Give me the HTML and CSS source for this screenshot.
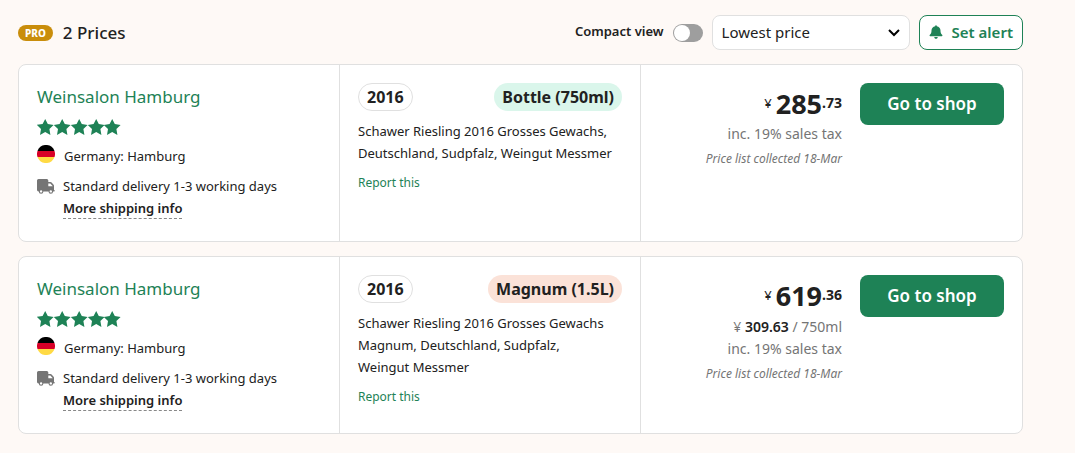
FILE: index.html
```html
<!DOCTYPE html>
<html lang="en">
<head>
<meta charset="utf-8">
<meta name="viewport" content="width=device-width, initial-scale=1">
<title>Prices</title>
<link rel="stylesheet" href="styles.css">
</head>
<body>
<svg class="sprite" aria-hidden="true">
  <symbol id="stars" viewBox="0 0 84 16">
    <path id="star" d="M8.200 0l2.600 5.100 5.800.8-4.200 4.100 1 5.900-5.200-2.800L3 15.900l1-5.900L-.2 5.900l5.800-.8z"/>
    <use href="#star" x="17"/><use href="#star" x="34"/><use href="#star" x="51"/><use href="#star" x="67"/>
  </symbol>
  <symbol id="flag" viewBox="0 0 18 18">
    <path fill="#000" d="M.5 6a9 9 0 0 1 17 0z"/>
    <path fill="#d80027" d="M.5 6h17a9 9 0 0 1 0 6H.5a9 9 0 0 1 0-6z"/>
    <path fill="#ffda44" d="M.5 12h17a9 9 0 0 1-17 0z"/>
  </symbol>
  <symbol id="truck" viewBox="0 0 18 16">
    <path fill-rule="evenodd" d="M1.500 1h8.300a1.500 1.500 0 0 1 1.500 1.500V4h2.200c.4 0 .8.200 1.100.500l2 2.200c.3.300.4.600.4 1V12c.5 0 .8.300.8.700s-.3.700-.8.700h-.9a2.300 2.300 0 0 1-4.600 0H6.400a2.300 2.300 0 0 1-4.600 0H1.500A1.500 1.500 0 0 1 0 12V2.500A1.500 1.500 0 0 1 1.500 1zm9.800 4.400v2.900h4.300v-.4l-2.300-2.500zM4.100 12.200a1.200 1.200 0 1 0 0 2.400 1.200 1.200 0 0 0 0-2.400zm9.700 0a1.200 1.200 0 1 0 0 2.400 1.200 1.200 0 0 0 0-2.400z"/>
  </symbol>
</svg>
<main class="prices">
  <header class="toolbar">
    <span class="pro">PRO</span>
    <h1 class="title">2 Prices</h1>
    <label class="compact" for="compact">Compact view</label>
    <input class="switch" type="checkbox" role="switch" id="compact">
    <div class="sort">
      <select class="sort-select" aria-label="Sort by"><option>Lowest price</option><option>Highest price</option></select>
      <svg class="chevron" viewBox="0 0 12 8" aria-hidden="true"><path d="M1 1l5 5 5-5"/></svg>
    </div>
    <button class="alert" type="button">
      <svg class="bell" viewBox="0 0 14 14" aria-hidden="true"><path d="M6.200 1a.8.800 0 0 1 1.600 0v.2c2.200.4 3.700 2.200 3.700 4.400 0 2 .3 3.100 1.800 4.500.3.400.1 1.100-.5 1.100H1.200c-.6 0-.8-.7-.5-1.100C2.200 8.700 2.500 7.600 2.500 5.600c0-2.200 1.500-4 3.700-4.400zM5.200 12.100h3.600a1.800 1.800 0 0 1-3.600 0z"/></svg>
      Set alert
    </button>
  </header>

  <article class="card">
    <section class="cell">
      <a class="shop" href="#">Weinsalon Hamburg</a>
      <svg class="stars" role="img" aria-label="5 stars"><use href="#stars"/></svg>
      <div class="place"><svg class="flag" aria-hidden="true"><use href="#flag"/></svg><span>Germany: Hamburg</span></div>
      <div class="shipping"><svg class="truck" aria-hidden="true"><use href="#truck"/></svg>
        <div>Standard delivery 1-3 working days<br><a class="more" href="#">More shipping info</a></div></div>
    </section>
    <section class="cell">
      <div class="tags"><span class="tag year">2016</span><span class="tag bottle">Bottle (750ml)</span></div>
      <p class="wine">Schawer Riesling 2016 Grosses Gewachs, Deutschland, Sudpfalz, Weingut&nbsp;Messmer</p>
      <a class="report" href="#">Report this</a>
    </section>
    <section class="cell offer">
      <div class="cost">
        <div class="price"><span class="currency">¥</span><span class="whole">285</span><span class="cents">.73</span></div>
        <div class="note">inc. 19% sales tax</div>
        <div class="collected">Price list collected 18-Mar</div>
      </div>
      <a class="go" href="#">Go to shop</a>
    </section>
  </article>

  <article class="card">
    <section class="cell">
      <a class="shop" href="#">Weinsalon Hamburg</a>
      <svg class="stars" role="img" aria-label="5 stars"><use href="#stars"/></svg>
      <div class="place"><svg class="flag" aria-hidden="true"><use href="#flag"/></svg><span>Germany: Hamburg</span></div>
      <div class="shipping"><svg class="truck" aria-hidden="true"><use href="#truck"/></svg>
        <div>Standard delivery 1-3 working days<br><a class="more" href="#">More shipping info</a></div></div>
    </section>
    <section class="cell">
      <div class="tags"><span class="tag year">2016</span><span class="tag magnum">Magnum (1.5L)</span></div>
      <p class="wine">Schawer Riesling 2016 Grosses Gewachs Magnum, Deutschland, Sudpfalz, Weingut&nbsp;Messmer</p>
      <a class="report" href="#">Report this</a>
    </section>
    <section class="cell offer">
      <div class="cost">
        <div class="price"><span class="currency">¥</span><span class="whole">619</span><span class="cents">.36</span></div>
        <div class="note per-bottle">¥ <b class="unit">309.63</b> / 750ml</div>
        <div class="note">inc. 19% sales tax</div>
        <div class="collected">Price list collected 18-Mar</div>
      </div>
      <a class="go" href="#">Go to shop</a>
    </section>
  </article>
</main>
</body>
</html>
```
FILE: styles.css
```css
* { box-sizing: border-box; }
body {
  margin: 0;
  background: #fef9f6;
  color: #212121;
  font: 13px/22px "Noto Sans", "Open Sans", sans-serif;
}
a { color: #1e8256; text-decoration: none; }
svg { display: block; flex: none; }
.sprite { position: absolute; width: 0; height: 0; }
.prices {
  display: flex;
  flex-direction: column;
  gap: 14px;
  padding: 15px 52px 19px 18px;
}
.toolbar { display: flex; align-items: center; }
.pro {
  padding: 0 7px;
  border-radius: 8px;
  background: #c98d0b;
  color: #fff;
  font-size: 10px;
  font-weight: 800;
  line-height: 16px;
}
.title { margin: 0 auto 0 10px; font-size: 17px; font-weight: 500; line-height: 24px; }
.compact { padding-bottom: 3px; font-weight: 600; }
.switch {
  appearance: none;
  display: flex;
  width: 30px;
  height: 18px;
  margin: 0 9px;
  padding: 1px;
  border-radius: 9px;
  background: #9e9e9e;
}
.switch::before { content: ""; width: 16px; height: 16px; border-radius: 50%; background: #fff; }
.switch:checked { justify-content: flex-end; background: #1e8256; }
.sort { display: grid; align-items: center; width: 198px; margin-right: 9px; }
.sort > * { grid-area: 1 / 1; }
.sort-select {
  appearance: none;
  width: 100%;
  height: 35px;
  padding: 0 9px 2px;
  border: 1px solid #e0e0e0;
  border-radius: 8px;
  background: #fff;
  color: inherit;
  font: 15px "Noto Sans", sans-serif;
}
.chevron {
  justify-self: end;
  width: 12px;
  height: 8px;
  margin-right: 10px;
  fill: none;
  stroke: #000;
  stroke-width: 2;
  pointer-events: none;
}
.alert {
  display: flex;
  align-items: center;
  gap: 9px;
  height: 35px;
  padding: 0 9px 1px;
  border: 1px solid #1e8256;
  border-radius: 8px;
  background: #fff;
  color: #1e8256;
  font: 600 15px "Noto Sans", sans-serif;
  white-space: nowrap;
}
.bell { width: 14px; height: 14px; fill: currentColor; }
.card {
  display: grid;
  grid-template-columns: 320fr 301fr 382fr;
  border: 1px solid #e0e0e0;
  border-radius: 8px;
  background: #fff;
}
.cell { min-width: 0; padding: 18px 18px 22px; }
.cell + .cell { border-left: 1px solid #e0e0e0; }
.shop { display: block; font-size: 17px; line-height: 28px; }
.stars { width: 84px; height: 16px; margin-top: 8px; fill: #1e8256; }
.place { display: flex; gap: 9px; margin-top: 10px; }
.flag { width: 18px; height: 18px; }
.shipping { display: flex; gap: 8px; margin-top: 8px; }
.truck { width: 18px; height: 16px; margin-top: 3px; fill: #757575; }
.more { display: inline-block; border-bottom: 1px dashed #888; color: inherit; font-weight: 600; line-height: 20px; }
.tags { display: flex; justify-content: space-between; }
.tag {
  padding: 0 8px;
  border-radius: 14px;
  font-size: 16px;
  font-weight: 700;
  line-height: 28px;
}
.year { border: 1px solid #e0e0e0; line-height: 26px; }
.bottle { background: #daf6eb; }
.magnum { background: #fbe2d8; }
.wine { margin: 9px 0 8px; }
.report { display: block; font-size: 12px; }
.offer { display: flex; justify-content: flex-end; gap: 18px; }
.cost { color: #757575; text-align: right; white-space: nowrap; }
.price {
  display: flex;
  justify-content: flex-end;
  align-items: flex-start;
  padding: 4px 0 2px;
  color: #212121;
  line-height: 34px;
}
.currency { margin-right: 4px; line-height: 32px; }
.whole { font-size: 27px; font-weight: 700; }
.cents { font-size: 14px; font-weight: 700; line-height: 32px; }
.note { font-size: 14px; }
.per-bottle { padding-top: 1px; }
.unit { color: #212121; font-weight: 600; }
.collected { padding-top: 3px; font-size: 12px; font-style: italic; }
.go {
  flex: none;
  width: 144px;
  height: 42px;
  border-radius: 8px;
  background: #1e8256;
  color: #fff;
  font-size: 17px;
  font-weight: 600;
  line-height: 42px;
  text-align: center;
}
```
